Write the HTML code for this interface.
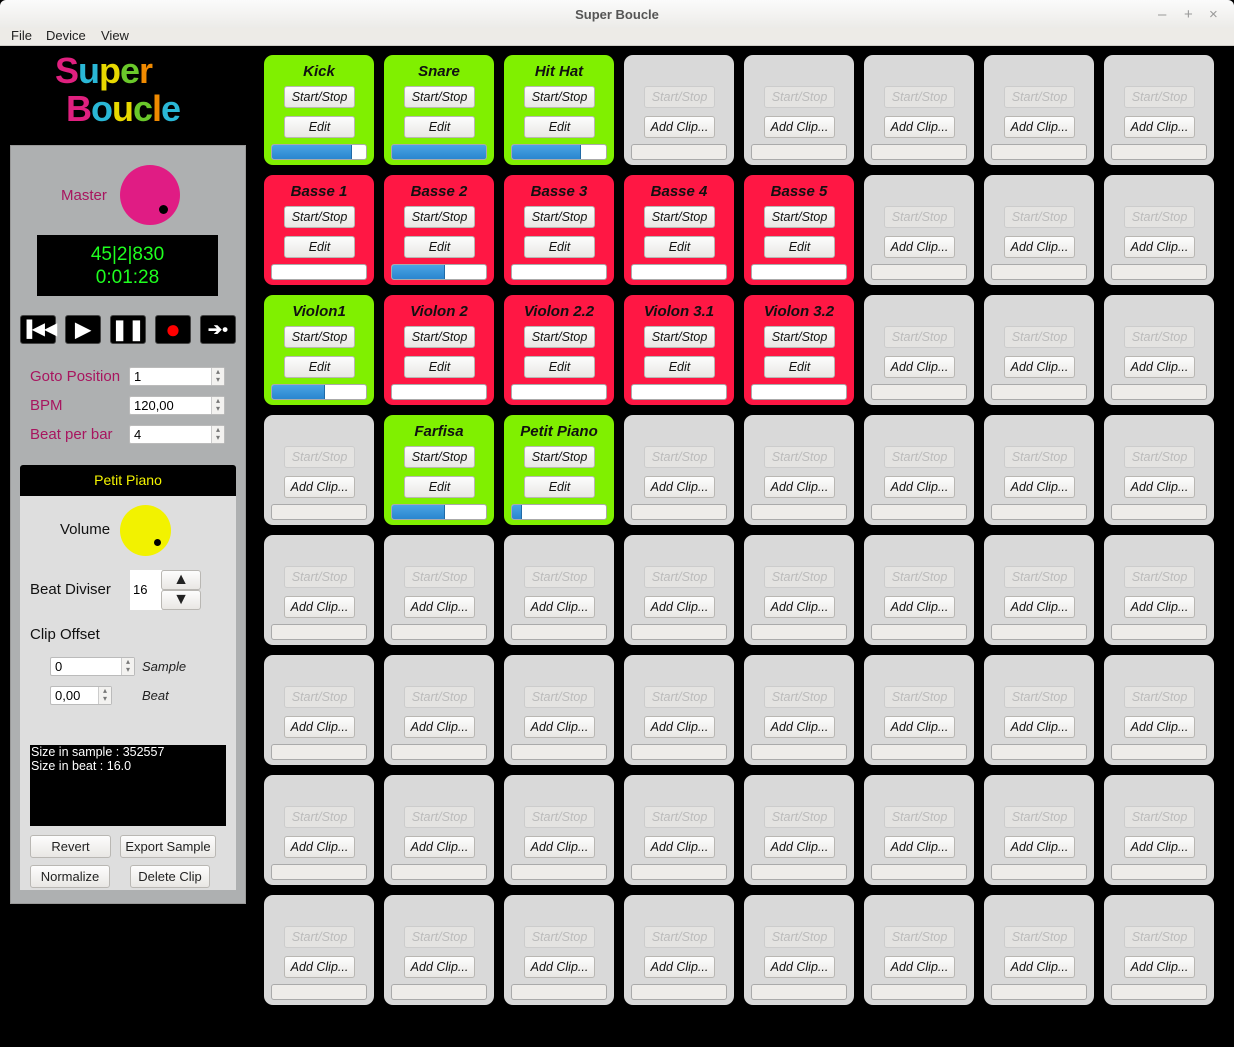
<!DOCTYPE html>
<html><head><meta charset="utf-8"><style>
*{box-sizing:border-box;margin:0;padding:0}
body{width:1234px;height:1047px;background:#000;font-family:"Liberation Sans",sans-serif;position:relative;overflow:hidden}
.tb{position:absolute;left:0;top:0;width:1234px;height:28px;background:linear-gradient(#fbfbfb,#ecebe8);border-radius:6px 6px 0 0;text-align:center;font-size:13px;line-height:29px;color:#555;font-weight:bold}
.tb span{position:absolute;top:0;color:#999;font-size:15px;font-weight:normal}
.mb{position:absolute;left:0;top:28px;width:1234px;height:18px;background:#edebe7;font-size:13px;color:#222;border-bottom:1px solid #cfcdc8}
.mb i{font-style:normal;position:absolute;top:0}
.grid{position:absolute;left:264px;top:55px;display:grid;grid-template-columns:repeat(8,110px);grid-auto-rows:110px;gap:10px}
.c{position:relative;background:#d9d9d9;border-radius:9px}
.c.g{background:#80f000}.c.r{background:#ff1744}
.c b{position:absolute;left:0;right:0;top:8px;text-align:center;font-style:italic;font-size:15px;color:#111}
.c i{position:absolute;left:20px;width:71px;height:22px;background:linear-gradient(#fdfdfd,#e9e7e4);border:1px solid #b9b7b3;border-radius:3px;font-size:12.5px;text-align:center;line-height:21px;color:#111}
.c i.s{top:31px}.c i.e{top:61px}
.c i.d{color:#bbb;background:#e4e3e1;border-color:#ccc}
.c u{position:absolute;left:7px;top:89px;width:96px;height:16px;background:#fff;border:1px solid #aaa;border-radius:3px;overflow:hidden}
.c:not(.g):not(.r) u{background:#eeece9}
.c u s{display:block;height:100%;background:linear-gradient(#4aa3e3,#2a86cf);border-right:1px solid #1f6aa6}
.a{position:absolute}
.tr{position:absolute;top:315px;width:36px;height:29px;background:#000;border:1px solid #444;border-radius:3px;color:#fff;text-align:center;line-height:28px;font-size:20px;font-weight:bold}
.lab{position:absolute;color:#a8155f;font-size:15px}
.spin{position:absolute;left:129px;width:96px;height:19px;background:#fff;border:1px solid #bbb;border-radius:2px;font-size:13px;line-height:18px;padding-left:4px}
.spin:after{content:"▴\A▾";white-space:pre;position:absolute;right:0;top:0;width:12px;height:17px;font-size:8px;line-height:8px;color:#777;border-left:1px solid #ccc;background:#f3f2f0;text-align:center}
.btn{position:absolute;height:23px;background:linear-gradient(#fdfdfd,#e9e7e4);border:1px solid #b9b7b3;border-radius:3px;font-size:13px;text-align:center;line-height:21px;color:#222}
</style></head><body>
<div class="tb">Super Boucle<span style="left:1158px">–</span><span style="left:1184px">+</span><span style="left:1209px">×</span></div>
<div class="mb"><i style="left:11px">File</i><i style="left:46px">Device</i><i style="left:101px">View</i></div>

<div class="a" style="left:55px;top:54px;font:bold 36px 'Liberation Sans',sans-serif;line-height:34px;letter-spacing:-1px">
<span style="color:#e0207f">S</span><span style="color:#2ab7d6">u</span><span style="color:#e8d800">p</span><span style="color:#6ac82a">e</span><span style="color:#f08a00">r</span></div>
<div class="a" style="left:66px;top:92px;font:bold 36px 'Liberation Sans',sans-serif;line-height:34px;letter-spacing:-1px">
<span style="color:#e0207f">B</span><span style="color:#2ab7d6">o</span><span style="color:#e8d800">u</span><span style="color:#6ac82a">c</span><span style="color:#f08a00">l</span><span style="color:#2ab7d6">e</span></div>

<div class="a" style="left:10px;top:145px;width:236px;height:759px;background:#aeb0b1;border:1px solid #999"></div>
<div class="lab" style="left:61px;top:187px">Master</div>
<div class="a" style="left:120px;top:165px;width:60px;height:60px;border-radius:50%;background:#e01c84"></div>
<div class="a" style="left:159px;top:205px;width:9px;height:9px;border-radius:50%;background:#000"></div>
<div class="a" style="left:37px;top:235px;width:181px;height:61px;background:#000;color:#1fff1f;font-size:19px;text-align:center;line-height:23px;padding-top:8px">45|2|830<br>0:01:28</div>

<div class="tr" style="left:20px;font-size:16px">▐◀◀</div>
<div class="tr" style="left:65px">▶</div>
<div class="tr" style="left:110px">❚❚</div>
<div class="tr" style="left:155px;color:#f00;font-size:26px;line-height:26px">●</div>
<div class="tr" style="left:200px;font-size:17px">➔•</div>

<div class="lab" style="left:30px;top:368px">Goto Position</div><div class="spin" style="top:367px">1</div>
<div class="lab" style="left:30px;top:397px">BPM</div><div class="spin" style="top:396px">120,00</div>
<div class="lab" style="left:30px;top:426px">Beat per bar</div><div class="spin" style="top:425px">4</div>

<div class="a" style="left:20px;top:465px;width:216px;height:31px;background:#000;border-radius:3px 3px 0 0;color:#f5f500;font-size:14px;text-align:center;line-height:31px">Petit Piano</div>
<div class="a" style="left:20px;top:496px;width:216px;height:394px;background:#dedede"></div>
<div class="a" style="left:60px;top:521px;font-size:15px;color:#111">Volume</div>
<div class="a" style="left:120px;top:505px;width:51px;height:51px;border-radius:50%;background:#f2f200"></div>
<div class="a" style="left:154px;top:539px;width:7px;height:7px;border-radius:50%;background:#000"></div>
<div class="a" style="left:30px;top:581px;font-size:15px;color:#111">Beat Diviser</div>
<div class="a" style="left:130px;top:570px;width:32px;height:40px;background:#fff;font-size:13px;line-height:40px;padding-left:3px">16</div>
<div class="btn" style="left:161px;top:570px;width:40px;height:20px;line-height:18px;font-size:16px">▲</div>
<div class="btn" style="left:161px;top:590px;width:40px;height:20px;line-height:18px;font-size:16px">▼</div>
<div class="a" style="left:30px;top:626px;font-size:15px;color:#111">Clip Offset</div>
<div class="spin" style="left:50px;top:657px;width:85px">0</div>
<div class="a" style="left:142px;top:659px;font-size:13px;font-style:italic;color:#222">Sample</div>
<div class="spin" style="left:50px;top:686px;width:62px">0,00</div>
<div class="a" style="left:142px;top:688px;font-size:13px;font-style:italic;color:#222">Beat</div>
<div class="a" style="left:30px;top:745px;width:196px;height:81px;background:#000;color:#fff;font-size:12.5px;line-height:14px;padding-left:1px">Size in sample : 352557<br>Size in beat : 16.0</div>
<div class="btn" style="left:30px;top:835px;width:81px">Revert</div>
<div class="btn" style="left:120px;top:835px;width:96px">Export Sample</div>
<div class="btn" style="left:30px;top:865px;width:80px">Normalize</div>
<div class="btn" style="left:130px;top:865px;width:80px">Delete Clip</div>

<div class="grid">
<div class="c g"><b>Kick</b><i class="s">Start/Stop</i><i class="e">Edit</i><u><s style="width:80px"></s></u></div>
<div class="c g"><b>Snare</b><i class="s">Start/Stop</i><i class="e">Edit</i><u><s style="width:96px"></s></u></div>
<div class="c g"><b>Hit Hat</b><i class="s">Start/Stop</i><i class="e">Edit</i><u><s style="width:69px"></s></u></div>
<div class="c"><i class="s d">Start/Stop</i><i class="e">Add Clip...</i><u></u></div>
<div class="c"><i class="s d">Start/Stop</i><i class="e">Add Clip...</i><u></u></div>
<div class="c"><i class="s d">Start/Stop</i><i class="e">Add Clip...</i><u></u></div>
<div class="c"><i class="s d">Start/Stop</i><i class="e">Add Clip...</i><u></u></div>
<div class="c"><i class="s d">Start/Stop</i><i class="e">Add Clip...</i><u></u></div>

<div class="c r"><b>Basse 1</b><i class="s">Start/Stop</i><i class="e">Edit</i><u></u></div>
<div class="c r"><b>Basse 2</b><i class="s">Start/Stop</i><i class="e">Edit</i><u><s style="width:53px"></s></u></div>
<div class="c r"><b>Basse 3</b><i class="s">Start/Stop</i><i class="e">Edit</i><u></u></div>
<div class="c r"><b>Basse 4</b><i class="s">Start/Stop</i><i class="e">Edit</i><u></u></div>
<div class="c r"><b>Basse 5</b><i class="s">Start/Stop</i><i class="e">Edit</i><u></u></div>
<div class="c"><i class="s d">Start/Stop</i><i class="e">Add Clip...</i><u></u></div>
<div class="c"><i class="s d">Start/Stop</i><i class="e">Add Clip...</i><u></u></div>
<div class="c"><i class="s d">Start/Stop</i><i class="e">Add Clip...</i><u></u></div>

<div class="c g"><b>Violon1</b><i class="s">Start/Stop</i><i class="e">Edit</i><u><s style="width:53px"></s></u></div>
<div class="c r"><b>Violon 2</b><i class="s">Start/Stop</i><i class="e">Edit</i><u></u></div>
<div class="c r"><b>Violon 2.2</b><i class="s">Start/Stop</i><i class="e">Edit</i><u></u></div>
<div class="c r"><b>Violon 3.1</b><i class="s">Start/Stop</i><i class="e">Edit</i><u></u></div>
<div class="c r"><b>Violon 3.2</b><i class="s">Start/Stop</i><i class="e">Edit</i><u></u></div>
<div class="c"><i class="s d">Start/Stop</i><i class="e">Add Clip...</i><u></u></div>
<div class="c"><i class="s d">Start/Stop</i><i class="e">Add Clip...</i><u></u></div>
<div class="c"><i class="s d">Start/Stop</i><i class="e">Add Clip...</i><u></u></div>

<div class="c"><i class="s d">Start/Stop</i><i class="e">Add Clip...</i><u></u></div>
<div class="c g"><b>Farfisa</b><i class="s">Start/Stop</i><i class="e">Edit</i><u><s style="width:53px"></s></u></div>
<div class="c g"><b>Petit Piano</b><i class="s">Start/Stop</i><i class="e">Edit</i><u><s style="width:10px"></s></u></div>
<div class="c"><i class="s d">Start/Stop</i><i class="e">Add Clip...</i><u></u></div>
<div class="c"><i class="s d">Start/Stop</i><i class="e">Add Clip...</i><u></u></div>
<div class="c"><i class="s d">Start/Stop</i><i class="e">Add Clip...</i><u></u></div>
<div class="c"><i class="s d">Start/Stop</i><i class="e">Add Clip...</i><u></u></div>
<div class="c"><i class="s d">Start/Stop</i><i class="e">Add Clip...</i><u></u></div>

<div class="c"><i class="s d">Start/Stop</i><i class="e">Add Clip...</i><u></u></div>
<div class="c"><i class="s d">Start/Stop</i><i class="e">Add Clip...</i><u></u></div>
<div class="c"><i class="s d">Start/Stop</i><i class="e">Add Clip...</i><u></u></div>
<div class="c"><i class="s d">Start/Stop</i><i class="e">Add Clip...</i><u></u></div>
<div class="c"><i class="s d">Start/Stop</i><i class="e">Add Clip...</i><u></u></div>
<div class="c"><i class="s d">Start/Stop</i><i class="e">Add Clip...</i><u></u></div>
<div class="c"><i class="s d">Start/Stop</i><i class="e">Add Clip...</i><u></u></div>
<div class="c"><i class="s d">Start/Stop</i><i class="e">Add Clip...</i><u></u></div>

<div class="c"><i class="s d">Start/Stop</i><i class="e">Add Clip...</i><u></u></div>
<div class="c"><i class="s d">Start/Stop</i><i class="e">Add Clip...</i><u></u></div>
<div class="c"><i class="s d">Start/Stop</i><i class="e">Add Clip...</i><u></u></div>
<div class="c"><i class="s d">Start/Stop</i><i class="e">Add Clip...</i><u></u></div>
<div class="c"><i class="s d">Start/Stop</i><i class="e">Add Clip...</i><u></u></div>
<div class="c"><i class="s d">Start/Stop</i><i class="e">Add Clip...</i><u></u></div>
<div class="c"><i class="s d">Start/Stop</i><i class="e">Add Clip...</i><u></u></div>
<div class="c"><i class="s d">Start/Stop</i><i class="e">Add Clip...</i><u></u></div>

<div class="c"><i class="s d">Start/Stop</i><i class="e">Add Clip...</i><u></u></div>
<div class="c"><i class="s d">Start/Stop</i><i class="e">Add Clip...</i><u></u></div>
<div class="c"><i class="s d">Start/Stop</i><i class="e">Add Clip...</i><u></u></div>
<div class="c"><i class="s d">Start/Stop</i><i class="e">Add Clip...</i><u></u></div>
<div class="c"><i class="s d">Start/Stop</i><i class="e">Add Clip...</i><u></u></div>
<div class="c"><i class="s d">Start/Stop</i><i class="e">Add Clip...</i><u></u></div>
<div class="c"><i class="s d">Start/Stop</i><i class="e">Add Clip...</i><u></u></div>
<div class="c"><i class="s d">Start/Stop</i><i class="e">Add Clip...</i><u></u></div>

<div class="c"><i class="s d">Start/Stop</i><i class="e">Add Clip...</i><u></u></div>
<div class="c"><i class="s d">Start/Stop</i><i class="e">Add Clip...</i><u></u></div>
<div class="c"><i class="s d">Start/Stop</i><i class="e">Add Clip...</i><u></u></div>
<div class="c"><i class="s d">Start/Stop</i><i class="e">Add Clip...</i><u></u></div>
<div class="c"><i class="s d">Start/Stop</i><i class="e">Add Clip...</i><u></u></div>
<div class="c"><i class="s d">Start/Stop</i><i class="e">Add Clip...</i><u></u></div>
<div class="c"><i class="s d">Start/Stop</i><i class="e">Add Clip...</i><u></u></div>
<div class="c"><i class="s d">Start/Stop</i><i class="e">Add Clip...</i><u></u></div>
</div>
</body></html>
